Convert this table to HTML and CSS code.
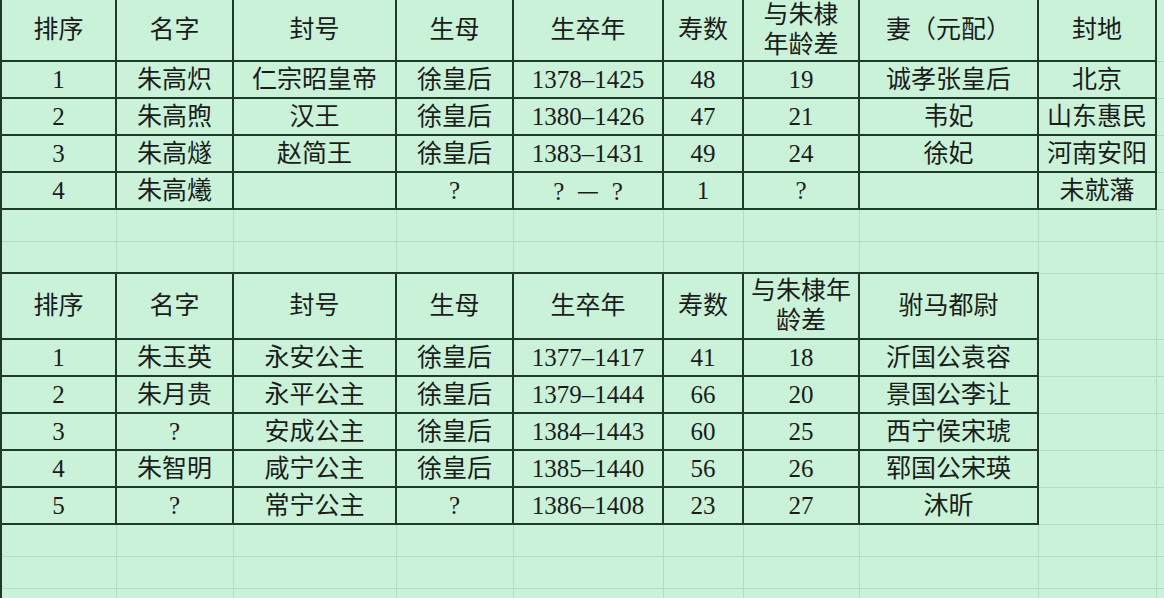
FILE: index.html
```html
<!DOCTYPE html>
<html lang="zh-CN">
<head>
<meta charset="utf-8">
<title>明成祖子女表</title>
<link rel="stylesheet" href="styles.css">
</head>
<body>
<table class="sheet">
  <colgroup>
    <col class="c1"><col class="c2"><col class="c3"><col class="c4"><col class="c5">
    <col class="c6"><col class="c7"><col class="c8"><col class="c9"><col class="c10">
  </colgroup>
  <tbody>
    <tr class="r-head1 top">
      <td class="d">排序</td><td class="d">名字</td><td class="d">封号</td><td class="d">生母</td><td class="d">生卒年</td>
      <td class="d">寿数</td><td class="d two">与朱棣<br>年龄差</td><td class="d">妻（元配）</td><td class="d">封地</td><td></td>
    </tr>
    <tr class="r">
      <td class="d">1</td><td class="d">朱高炽</td><td class="d">仁宗昭皇帝</td><td class="d">徐皇后</td><td class="d">1378–1425</td>
      <td class="d">48</td><td class="d">19</td><td class="d">诚孝张皇后</td><td class="d">北京</td><td></td>
    </tr>
    <tr class="r">
      <td class="d">2</td><td class="d">朱高煦</td><td class="d">汉王</td><td class="d">徐皇后</td><td class="d">1380–1426</td>
      <td class="d">47</td><td class="d">21</td><td class="d">韦妃</td><td class="d">山东惠民</td><td></td>
    </tr>
    <tr class="r">
      <td class="d">3</td><td class="d">朱高燧</td><td class="d">赵简王</td><td class="d">徐皇后</td><td class="d">1383–1431</td>
      <td class="d">49</td><td class="d">24</td><td class="d">徐妃</td><td class="d">河南安阳</td><td></td>
    </tr>
    <tr class="r">
      <td class="d">4</td><td class="d">朱高爔</td><td class="d"></td><td class="d">?</td><td class="d">?&nbsp;&nbsp;<span class="dash">—</span>&nbsp;&nbsp;?</td>
      <td class="d">1</td><td class="d">?</td><td class="d"></td><td class="d">未就藩</td><td></td>
    </tr>
    <tr class="r-gap">
      <td></td><td></td><td></td><td></td><td></td><td></td><td></td><td></td><td></td><td></td>
    </tr>
    <tr class="r-gap">
      <td></td><td></td><td></td><td></td><td></td><td></td><td></td><td></td><td></td><td></td>
    </tr>
    <tr class="r-head2">
      <td class="d">排序</td><td class="d">名字</td><td class="d">封号</td><td class="d">生母</td><td class="d">生卒年</td>
      <td class="d">寿数</td><td class="d two">与朱棣年<br>龄差</td><td class="d">驸马都尉</td><td></td><td></td>
    </tr>
    <tr class="r">
      <td class="d">1</td><td class="d">朱玉英</td><td class="d">永安公主</td><td class="d">徐皇后</td><td class="d">1377–1417</td>
      <td class="d">41</td><td class="d">18</td><td class="d">沂国公袁容</td><td></td><td></td>
    </tr>
    <tr class="r">
      <td class="d">2</td><td class="d">朱月贵</td><td class="d">永平公主</td><td class="d">徐皇后</td><td class="d">1379–1444</td>
      <td class="d">66</td><td class="d">20</td><td class="d">景国公李让</td><td></td><td></td>
    </tr>
    <tr class="r">
      <td class="d">3</td><td class="d">?</td><td class="d">安成公主</td><td class="d">徐皇后</td><td class="d">1384–1443</td>
      <td class="d">60</td><td class="d">25</td><td class="d">西宁侯宋琥</td><td></td><td></td>
    </tr>
    <tr class="r">
      <td class="d">4</td><td class="d">朱智明</td><td class="d">咸宁公主</td><td class="d">徐皇后</td><td class="d">1385–1440</td>
      <td class="d">56</td><td class="d">26</td><td class="d">郓国公宋瑛</td><td></td><td></td>
    </tr>
    <tr class="r">
      <td class="d">5</td><td class="d">?</td><td class="d">常宁公主</td><td class="d">?</td><td class="d">1386–1408</td>
      <td class="d">23</td><td class="d">27</td><td class="d">沐昕</td><td></td><td></td>
    </tr>
    <tr class="r-gap">
      <td></td><td></td><td></td><td></td><td></td><td></td><td></td><td></td><td></td><td></td>
    </tr>
    <tr class="r-gap">
      <td></td><td></td><td></td><td></td><td></td><td></td><td></td><td></td><td></td><td></td>
    </tr>
    <tr class="r-rest">
      <td></td><td></td><td></td><td></td><td></td><td></td><td></td><td></td><td></td><td></td>
    </tr>
  </tbody>
</table>
</body>
</html>
```

FILE: styles.css
```css
html, body {
  margin: 0;
  padding: 0;
  background: #c9f2d9;
}

body {
  width: 1164px;
  height: 598px;
  overflow: hidden;
}

.sheet {
  border-collapse: collapse;
  table-layout: fixed;
  width: 1164px;
  border-left: 2px solid #1d3a2b;
  font-family: "Liberation Serif", "Noto Sans CJK SC", serif;
  font-size: 25px;
  color: #1b1d1b;
}

.c1 { width: 115px; }
.c2 { width: 117px; }
.c3 { width: 163px; }
.c4 { width: 117px; }
.c5 { width: 150px; }
.c6 { width: 80px; }
.c7 { width: 116px; }
.c8 { width: 179px; }
.c9 { width: 118px; }
.c10 { width: 9px; }

.sheet td {
  border: 1px solid #b4dcc3;
  padding: 0;
  text-align: center;
  vertical-align: middle;
  line-height: 30px;
  white-space: nowrap;
  overflow: hidden;
}

.sheet td.d {
  border: 2px solid #1d3a2b;
}

.sheet .top td {
  border-top: none;
}

.sheet td.two {
  line-height: 30px;
}

.dash {
  font-family: "Noto Sans CJK SC", sans-serif;
}

.r-head1 { height: 61px; }
.r { height: 37px; }
.r-gap { height: 32px; }
.r-head2 { height: 66px; }
.r-rest { height: 12px; }
```
